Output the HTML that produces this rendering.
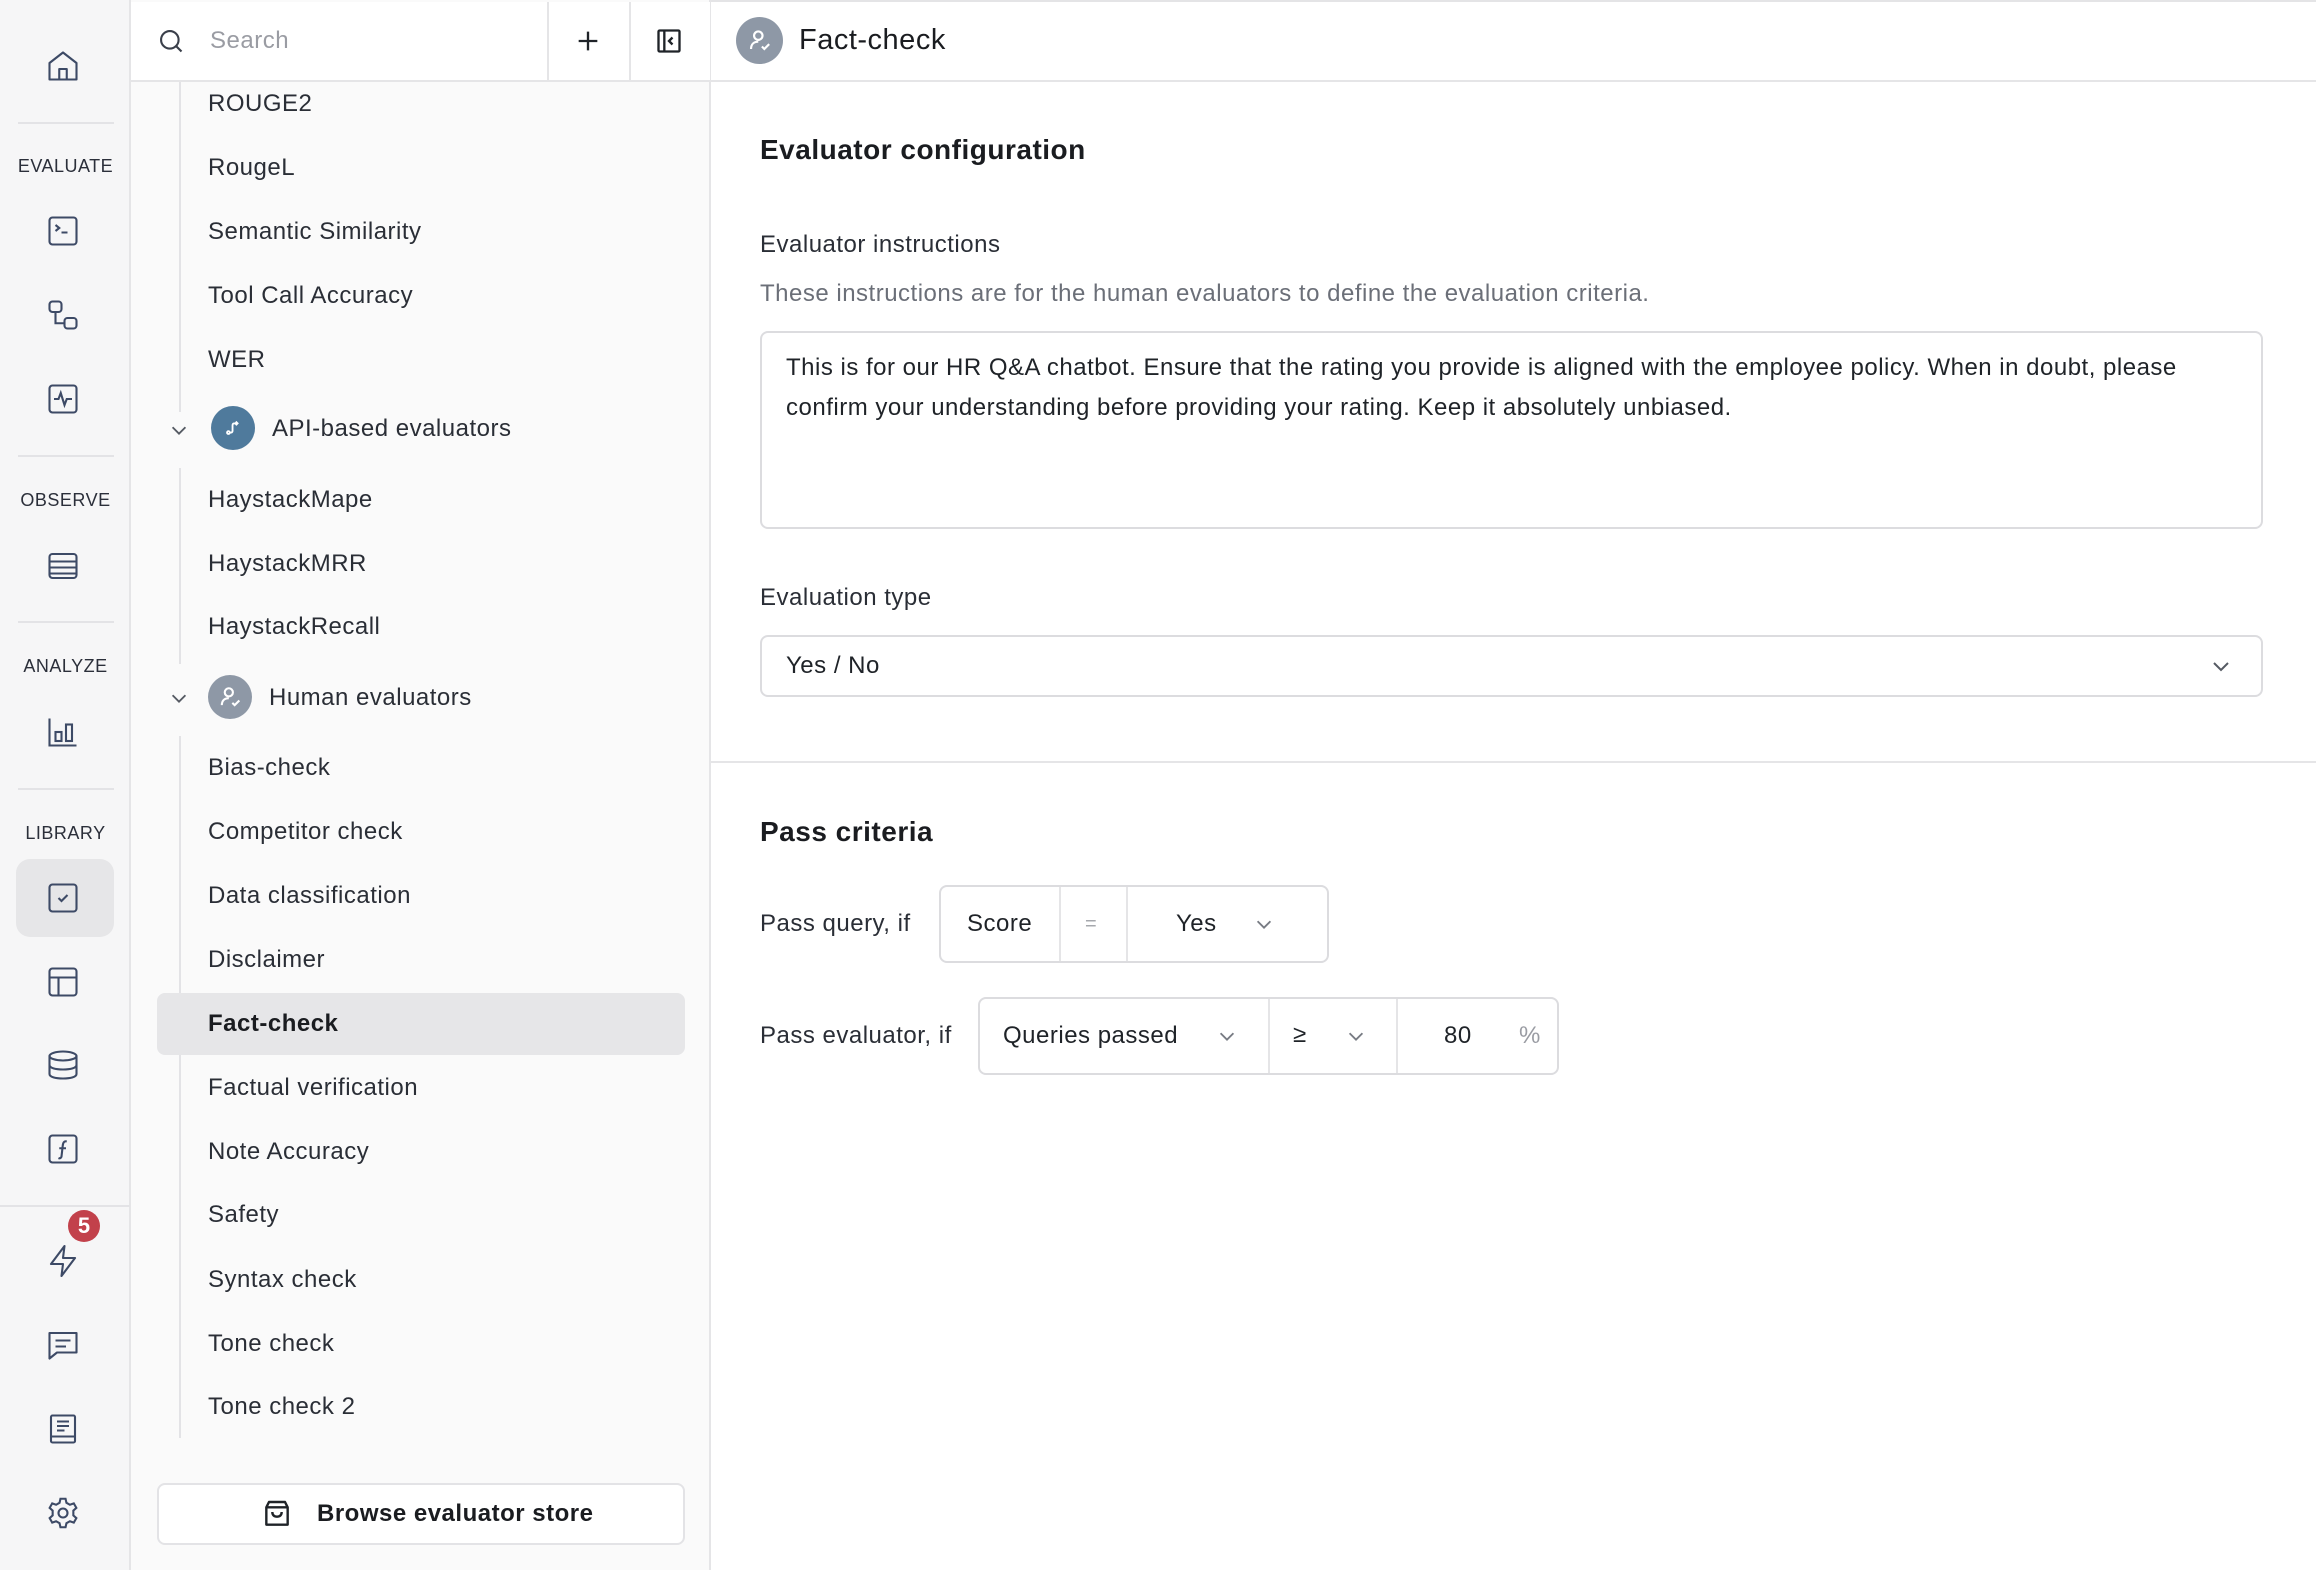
<!DOCTYPE html>
<html><head><meta charset="utf-8">
<style>
*{box-sizing:border-box;margin:0;padding:0}
body{width:2316px;height:1570px;position:relative;overflow:hidden;background:#fff;font-family:"Liberation Sans",sans-serif;color:#1f2328;letter-spacing:0.5px}
.a{position:absolute}
.rail{left:0;top:0;width:131px;height:1570px;background:#f6f6f7;border-right:2px solid #e5e5e7}
.mid{left:131px;top:0;width:580px;height:1570px;background:#fafafa;border-right:2px solid #e5e5e7}
.top{left:0;top:0;width:2316px;height:2px;background:#e4e4e6}
.lbl{width:131px;text-align:center;font-size:18px;color:#2b2f3a;letter-spacing:0.5px}
.div{left:18px;width:96px;height:2px;background:#e3e3e6}
.ic{left:45px;width:36px;height:36px}
.it{left:208px;font-size:24px;color:#2a2e36;line-height:30px}
.t{font-size:24px;line-height:30px}
</style></head><body>
<div class="a top"></div>
<div class="a rail"></div>
<div class="a mid"></div>

<!-- rail -->
<svg class="a ic" style="top:48px" viewBox="0 0 24 24" fill="none" stroke="#3d4a66" stroke-width="1.4" stroke-linejoin="round"><path d="M3 10 L12 3 L21 10 V21 H3 Z"/><path d="M9.5 21 V14 H14.5 V21"/></svg>
<div class="a div" style="top:122px"></div>
<div class="a lbl" style="top:156px">EVALUATE</div>
<svg class="a ic" style="top:213px" viewBox="0 0 24 24" fill="none" stroke="#3d4a66" stroke-width="1.4"><rect x="3" y="3" width="18" height="18" rx="2"/><path d="M7 8 L9.5 10 L7 12 M11 13 H15"/></svg>
<svg class="a ic" style="top:297px" viewBox="0 0 24 24" fill="none" stroke="#3d4a66" stroke-width="1.4"><rect x="3" y="3" width="8" height="7" rx="2"/><rect x="13" y="14" width="8" height="7" rx="2"/><path d="M7 10 V17.5 H13"/></svg>
<svg class="a ic" style="top:381px" viewBox="0 0 24 24" fill="none" stroke="#3d4a66" stroke-width="1.4"><rect x="3" y="3" width="18" height="18" rx="2"/><path d="M6 12 H9 L10.5 8 L13 16 L14.5 12 H18"/></svg>
<div class="a div" style="top:455px"></div>
<div class="a lbl" style="top:490px">OBSERVE</div>
<svg class="a ic" style="top:548px" viewBox="0 0 24 24" fill="none" stroke="#3d4a66" stroke-width="1.4"><rect x="3" y="4" width="18" height="16" rx="2"/><path d="M3 9 H21 M3 13 H21 M3 17 H21"/></svg>
<div class="a div" style="top:621px"></div>
<div class="a lbl" style="top:656px">ANALYZE</div>
<svg class="a ic" style="top:714px" viewBox="0 0 24 24" fill="none" stroke="#3d4a66" stroke-width="1.4"><path d="M3 3 V21 H21"/><rect x="7" y="12" width="4" height="6"/><rect x="14" y="7" width="4" height="11"/></svg>
<div class="a div" style="top:788px"></div>
<div class="a lbl" style="top:823px">LIBRARY</div>
<div class="a" style="left:16px;top:859px;width:98px;height:78px;background:#e6e6e8;border-radius:14px"></div>
<svg class="a ic" style="top:880px" viewBox="0 0 24 24" fill="none" stroke="#3d4a66" stroke-width="1.4"><rect x="3" y="3" width="18" height="18" rx="2"/><path d="M9 12 L11 14 L15 10"/></svg>
<svg class="a ic" style="top:964px" viewBox="0 0 24 24" fill="none" stroke="#3d4a66" stroke-width="1.4"><rect x="3" y="3" width="18" height="18" rx="2"/><path d="M3 9 H21 M9 9 V21"/></svg>
<svg class="a ic" style="top:1047px" viewBox="0 0 24 24" fill="none" stroke="#3d4a66" stroke-width="1.4"><ellipse cx="12" cy="6" rx="9" ry="3"/><path d="M3 6 V18 C3 20 7 21 12 21 C17 21 21 20 21 18 V6 M3 12 C3 14 7 15 12 15 C17 15 21 14 21 12"/></svg>
<svg class="a ic" style="top:1131px" viewBox="0 0 24 24" fill="none" stroke="#3d4a66" stroke-width="1.4"><rect x="3" y="3" width="18" height="18" rx="2"/><path d="M14.5 7 C12.5 6.5 12 8 11.8 10 L11 17 C10.8 18 10 18.5 9 18 M9.5 11.5 H14"/></svg>
<div class="a" style="left:0;top:1205px;width:130px;height:2px;background:#e3e3e6"></div>
<svg class="a ic" style="top:1243px" viewBox="0 0 24 24" fill="none" stroke="#3d4a66" stroke-width="1.4" stroke-linejoin="round"><path d="M13 2 L4 14 H12 L11 22 L20 10 H12 Z"/></svg>
<div class="a" style="left:68px;top:1210px;width:32px;height:32px;border-radius:50%;background:#c2414b;color:#fff;font-size:22px;font-weight:bold;text-align:center;line-height:32px;letter-spacing:0">5</div>
<svg class="a ic" style="top:1327px" viewBox="0 0 24 24" fill="none" stroke="#3d4a66" stroke-width="1.4" stroke-linejoin="round"><path d="M3 4 H21 V17 H8 L3 21 Z"/><path d="M7 9 H17 M7 13 H14"/></svg>
<svg class="a ic" style="top:1411px" viewBox="0 0 24 24" fill="none" stroke="#3d4a66" stroke-width="1.4"><rect x="4" y="3" width="16" height="18" rx="1"/><path d="M4 17 H20 M8 7 H16 M8 10 H16 M8 13 H13"/></svg>
<svg class="a ic" style="top:1495px" viewBox="0 0 24 24" fill="none" stroke="#3d4a66" stroke-width="1.4"><circle cx="12" cy="12" r="3"/><path d="M10.3 2.5 H13.7 L14.3 5.2 L16.6 6.5 L19.2 5.6 L20.9 8.6 L18.9 10.4 V13.6 L20.9 15.4 L19.2 18.4 L16.6 17.5 L14.3 18.8 L13.7 21.5 H10.3 L9.7 18.8 L7.4 17.5 L4.8 18.4 L3.1 15.4 L5.1 13.6 V10.4 L3.1 8.6 L4.8 5.6 L7.4 6.5 L9.7 5.2 Z"/></svg>

<!-- mid header -->
<div class="a" style="left:131px;top:2px;width:579px;height:78px;background:#fff"></div>
<div class="a" style="left:131px;top:80px;width:579px;height:2px;background:#e5e5e7"></div>
<svg class="a" style="left:157px;top:27px;width:28px;height:28px" viewBox="0 0 24 24" fill="none" stroke="#3a3f4a" stroke-width="1.8"><circle cx="11" cy="11" r="7.5"/><path d="M16.5 16.5 L21 21"/></svg>
<div class="a" style="left:210px;top:27px;font-size:24px;color:#9a9ca3">Search</div>
<div class="a" style="left:547px;top:2px;width:2px;height:78px;background:#e5e5e7"></div>
<div class="a" style="left:629px;top:2px;width:2px;height:78px;background:#e5e5e7"></div>
<svg class="a" style="left:574px;top:27px;width:28px;height:28px" viewBox="0 0 24 24" fill="none" stroke="#1f2328" stroke-width="2"><path d="M12 4 V20 M4 12 H20"/></svg>
<svg class="a" style="left:655px;top:27px;width:28px;height:28px" viewBox="0 0 24 24" fill="none" stroke="#1f2328" stroke-width="2"><rect x="3" y="3" width="18" height="18" rx="1"/><path d="M8 3 V21 M15 9 L12 12 L15 15"/></svg>

<!-- tree -->
<div class="a" style="left:179px;top:82px;width:2px;height:330px;background:#e3e3e6"></div>
<div class="a" style="left:179px;top:468px;width:2px;height:196px;background:#e3e3e6"></div>
<div class="a" style="left:179px;top:736px;width:2px;height:702px;background:#e3e3e6"></div>
<div class="a it" style="top:89px">ROUGE2</div>
<div class="a it" style="top:153px">RougeL</div>
<div class="a it" style="top:217px">Semantic Similarity</div>
<div class="a it" style="top:281px">Tool Call Accuracy</div>
<div class="a it" style="top:345px">WER</div>
<svg class="a" style="left:168px;top:419px;width:22px;height:22px" viewBox="0 0 24 24" fill="none" stroke="#555a63" stroke-width="2"><path d="M5 9 L12 16 L19 9"/></svg>
<div class="a" style="left:211px;top:406px;width:44px;height:44px;border-radius:50%;background:#4f7a9c"></div>
<svg class="a" style="left:222px;top:417px;width:22px;height:22px" viewBox="0 0 24 24" fill="none" stroke="#fff" stroke-width="2"><circle cx="7" cy="17" r="1.5"/><path d="M8.5 17 H10 C11 17 11.5 16 11.5 15 V9 C11.5 8 12 7 13 7 H17 M15 5 L17 7 L15 9"/></svg>
<div class="a it" style="left:272px;top:414px">API-based evaluators</div>
<div class="a it" style="top:485px">HaystackMape</div>
<div class="a it" style="top:549px">HaystackMRR</div>
<div class="a it" style="top:612px">HaystackRecall</div>
<svg class="a" style="left:168px;top:687px;width:22px;height:22px" viewBox="0 0 24 24" fill="none" stroke="#555a63" stroke-width="2"><path d="M5 9 L12 16 L19 9"/></svg>
<div class="a" style="left:208px;top:675px;width:44px;height:44px;border-radius:50%;background:#8e98a6"></div>
<svg class="a" style="left:216px;top:683px;width:28px;height:28px" viewBox="0 0 24 24" fill="none" stroke="#fff" stroke-width="1.8"><circle cx="11" cy="8" r="3.5"/><path d="M5 19 C5 15 7.5 13 11 13 M14 17 L16 19 L20 15"/></svg>
<div class="a it" style="left:269px;top:683px">Human evaluators</div>
<div class="a it" style="top:753px">Bias-check</div>
<div class="a it" style="top:817px">Competitor check</div>
<div class="a it" style="top:881px">Data classification</div>
<div class="a it" style="top:945px">Disclaimer</div>
<div class="a" style="left:157px;top:993px;width:528px;height:62px;background:#e6e6e8;border-radius:8px"></div>
<div class="a it" style="top:1009px;font-weight:bold;color:#1a1c20">Fact-check</div>
<div class="a it" style="top:1073px">Factual verification</div>
<div class="a it" style="top:1137px">Note Accuracy</div>
<div class="a it" style="top:1200px">Safety</div>
<div class="a it" style="top:1265px">Syntax check</div>
<div class="a it" style="top:1329px">Tone check</div>
<div class="a it" style="top:1392px">Tone check 2</div>
<div class="a" style="left:157px;top:1483px;width:528px;height:62px;background:#fff;border:2px solid #e3e3e6;border-radius:8px"></div>
<svg class="a" style="left:261px;top:1498px;width:32px;height:32px" viewBox="0 0 24 24" fill="none" stroke="#1f2328" stroke-width="1.8" stroke-linejoin="round"><path d="M4 7 L6 3 H18 L20 7 V20 H4 Z M4 7 H20 M8.5 10.5 C8.5 13 10 14 12 14 C14 14 15.5 13 15.5 10.5"/></svg>
<div class="a t" style="left:317px;top:1499px;font-weight:bold;color:#1a1c20">Browse evaluator store</div>

<!-- right header -->
<div class="a" style="left:711px;top:80px;width:1605px;height:2px;background:#e5e5e7"></div>
<div class="a" style="left:736px;top:17px;width:47px;height:47px;border-radius:50%;background:#8e98a6"></div>
<svg class="a" style="left:745px;top:26px;width:29px;height:29px" viewBox="0 0 24 24" fill="none" stroke="#fff" stroke-width="1.8"><circle cx="11" cy="8" r="3.5"/><path d="M5 19 C5 15 7.5 13 11 13 M14 17 L16 19 L20 15"/></svg>
<div class="a" style="left:799px;top:24px;font-size:29px;color:#1a1c20">Fact-check</div>

<div class="a" style="left:760px;top:134px;font-size:28px;font-weight:bold;color:#1a1c20">Evaluator configuration</div>
<div class="a t" style="left:760px;top:230px;color:#2a2e36">Evaluator instructions</div>
<div class="a t" style="left:760px;top:279px;color:#6b6f78">These instructions are for the human evaluators to define the evaluation criteria.</div>
<div class="a" style="left:760px;top:331px;width:1503px;height:198px;border:2px solid #dcdcdf;border-radius:8px"></div>
<div class="a" style="left:786px;top:348px;font-size:24px;line-height:40px;color:#1f2328">This is for our HR Q&amp;A chatbot. Ensure that the rating you provide is aligned with the employee policy. When in doubt, please<br>confirm your understanding before providing your rating. Keep it absolutely unbiased.</div>
<div class="a t" style="left:760px;top:583px;color:#2a2e36">Evaluation type</div>
<div class="a" style="left:760px;top:635px;width:1503px;height:62px;border:2px solid #dcdcdf;border-radius:8px"></div>
<div class="a t" style="left:786px;top:651px">Yes / No</div>
<svg class="a" style="left:2209px;top:654px;width:24px;height:24px" viewBox="0 0 24 24" fill="none" stroke="#555a63" stroke-width="2"><path d="M5 9 L12 16 L19 9"/></svg>
<div class="a" style="left:711px;top:761px;width:1605px;height:2px;background:#e5e5e7"></div>

<div class="a" style="left:760px;top:816px;font-size:28px;font-weight:bold;color:#1a1c20">Pass criteria</div>
<div class="a t" style="left:760px;top:909px;color:#2a2e36">Pass query, if</div>
<div class="a" style="left:939px;top:885px;width:390px;height:78px;border:2px solid #dcdcdf;border-radius:8px"></div>
<div class="a" style="left:1059px;top:887px;width:2px;height:74px;background:#e5e5e7"></div>
<div class="a" style="left:1126px;top:887px;width:2px;height:74px;background:#e5e5e7"></div>
<div class="a t" style="left:967px;top:909px">Score</div>
<div class="a t" style="left:1085px;top:909px;color:#a6a8ad;font-size:20px">=</div>
<div class="a t" style="left:1176px;top:909px">Yes</div>
<svg class="a" style="left:1253px;top:913px;width:22px;height:22px" viewBox="0 0 24 24" fill="none" stroke="#777b83" stroke-width="2"><path d="M5 9 L12 16 L19 9"/></svg>

<div class="a t" style="left:760px;top:1021px;color:#2a2e36">Pass evaluator, if</div>
<div class="a" style="left:978px;top:997px;width:581px;height:78px;border:2px solid #dcdcdf;border-radius:8px"></div>
<div class="a" style="left:1268px;top:999px;width:2px;height:74px;background:#e5e5e7"></div>
<div class="a" style="left:1396px;top:999px;width:2px;height:74px;background:#e5e5e7"></div>
<div class="a t" style="left:1003px;top:1021px">Queries passed</div>
<svg class="a" style="left:1216px;top:1025px;width:22px;height:22px" viewBox="0 0 24 24" fill="none" stroke="#777b83" stroke-width="2"><path d="M5 9 L12 16 L19 9"/></svg>
<div class="a t" style="left:1293px;top:1020px">≥</div>
<svg class="a" style="left:1345px;top:1025px;width:22px;height:22px" viewBox="0 0 24 24" fill="none" stroke="#777b83" stroke-width="2"><path d="M5 9 L12 16 L19 9"/></svg>
<div class="a t" style="left:1444px;top:1021px">80</div>
<div class="a t" style="left:1519px;top:1021px;color:#9a9ca3">%</div>
</body></html>
